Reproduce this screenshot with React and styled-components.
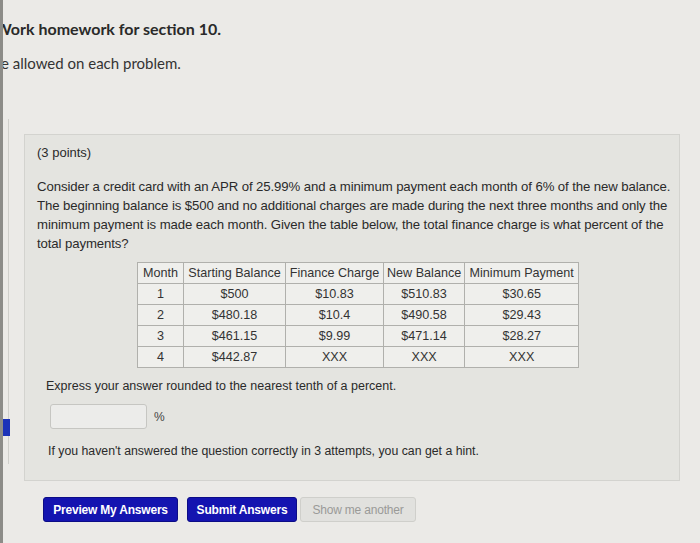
import styled, { createGlobalStyle } from "styled-components";

const Global = createGlobalStyle`
    body {
        margin: 0;
        background: #ebeae7;
        overflow: hidden;
    }
`

const rows = [
    ["1", "$500", "$10.83", "$510.83", "$30.65"],
    ["2", "$480.18", "$10.4", "$490.58", "$29.43"],
    ["3", "$461.15", "$9.99", "$471.14", "$28.27"],
    ["4", "$442.87", "XXX", "XXX", "XXX"],
]

const widths = [39, 95, 91, 73, 107]

export default function App() {

    return (
        <Page>
            <Global />
            <Title>Work homework for section 10.</Title>
            <Subtitle>e allowed on each problem.</Subtitle>
            <Row>
                <Sidebar>
                    <Tab />
                </Sidebar>
                <Content>
                    <Problem>
                        <Points>(3 points)</Points>
                        <Question>
                            Consider a credit card with an APR of 25.99% and a minimum payment each month of 6% of the new balance.<br />
                            The beginning balance is $500 and no additional charges are made during the next three months and only the<br />
                            minimum payment is made each month. Given the table below, the total finance charge is what percent of the<br />
                            total payments?
                        </Question>
                        <Table>
                            <thead>
                                <tr>
                                    <Head $w={widths[0]}>Month</Head>
                                    <Head $w={widths[1]}>Starting Balance</Head>
                                    <Head $w={widths[2]}>Finance Charge</Head>
                                    <Head $w={widths[3]}>New Balance</Head>
                                    <Head $w={widths[4]}>Minimum Payment</Head>
                                </tr>
                            </thead>
                            <tbody>
                                {rows.map((r) => (
                                    <tr key={r[0]}>
                                        {r.map((c, i) => (
                                            <Cell key={i}>{c}</Cell>
                                        ))}
                                    </tr>
                                ))}
                            </tbody>
                        </Table>
                        <Answer>
                            <Note>Express your answer rounded to the nearest tenth of a percent.</Note>
                            <InputRow>
                                <Input />
                                <Unit>%</Unit>
                            </InputRow>
                            <Hint>If you haven't answered the question correctly in 3 attempts, you can get a hint.</Hint>
                        </Answer>
                    </Problem>
                    <Buttons>
                        <Button $w={135}>Preview My Answers</Button>
                        <Button $w={110} $gap={9}>Submit Answers</Button>
                        <Button $w={116} $gap={3} $off>Show me another</Button>
                    </Buttons>
                </Content>
            </Row>
        </Page>
    )
}

const Page = styled.div`
    width: 700px;
    height: 543px;
    box-sizing: border-box;
    border-left: 3px solid #8c8c88;
    overflow: hidden;
`
const Title = styled.h1`
    margin: 19px 0 0 -8px;
    font-family: "Lato", sans-serif;
    font-size: 16px;
    font-weight: 700;
    line-height: 19px;
    color: #2a2a2a;
`
const Subtitle = styled.p`
    margin: 16px 0 0 -2px;
    font-family: "Lato", sans-serif;
    font-size: 15px;
    line-height: 18px;
    color: #333;
`
const Row = styled.div`
    margin-top: 47px;
    display: flex;
`
const Sidebar = styled.div`
    width: 5px;
    height: 345px;
    border-right: 1px solid #cfcfcb;
    display: flex;
    flex-direction: column;
`
const Tab = styled.div`
    margin-top: 300px;
    width: 7px;
    height: 17px;
    background: #1b32b8;
`
const Content = styled.div`
    padding: 15px 0 0 15px;
`
const Problem = styled.div`
    width: 656px;
    height: 347px;
    box-sizing: border-box;
    padding: 8px 0 0 12px;
    background: #e4e4e0;
    border: 1px solid #d3d3cf;
    font-family: "Liberation Sans", Arial, sans-serif;
    color: #2a2a2a;
`
const Points = styled.p`
    margin: 0;
    font-size: 13px;
    line-height: 19px;
`
const Question = styled.p`
    margin: 15px 0 0;
    font-size: 13.2px;
    line-height: 19px;
    letter-spacing: -0.1px;
    white-space: nowrap;
`
const Table = styled.table`
    margin: 9px 0 0 100px;
    border-collapse: collapse;
    background: #efefec;
    border: 1px solid #a0a09c;
    font-size: 12.6px;
    color: #333;
`
const Head = styled.th`
    width: ${(p) => p.$w}px;
    height: 20px;
    padding: 0 3px;
    border: 1px solid #b0b0ac;
    font-weight: 400;
    white-space: nowrap;
`
const Cell = styled.td`
    height: 20px;
    padding: 0 3px;
    border: 1px solid #b0b0ac;
    text-align: center;
`
const Answer = styled.div`
    padding-left: 9px;
`
const Note = styled.p`
    margin: 9px 0 0;
    font-size: 12.5px;
    line-height: 18px;
`
const InputRow = styled.div`
    margin-top: 9px;
    display: flex;
    align-items: center;
    gap: 7px;
`
const Input = styled.div`
    margin-left: 4px;
    width: 97px;
    height: 25px;
    box-sizing: border-box;
    background: #ececea;
    border: 1px solid #c6c6c2;
    border-radius: 3px;
`
const Unit = styled.span`
    font-size: 12px;
    color: #444;
`
const Hint = styled.p`
    margin: 13px 0 0 2px;
    font-size: 12.3px;
    line-height: 18px;
`
const Buttons = styled.div`
    margin: 16px 0 0 19px;
    display: flex;
`
const Button = styled.button`
    margin-left: ${(p) => p.$gap || 0}px;
    width: ${(p) => p.$w}px;
    height: 25px;
    padding: 0;
    border-radius: 3px;
    border: 1px solid ${(p) => (p.$off ? "#cfcfcb" : "#0c0c86")};
    background: ${(p) => (p.$off ? "#e1e1de" : "#1414b0")};
    color: ${(p) => (p.$off ? "#9a9a98" : "#ffffff")};
    font-family: "Liberation Sans", Arial, sans-serif;
    font-size: 12px;
    font-weight: ${(p) => (p.$off ? 400 : 700)};
    letter-spacing: -0.2px;
`
